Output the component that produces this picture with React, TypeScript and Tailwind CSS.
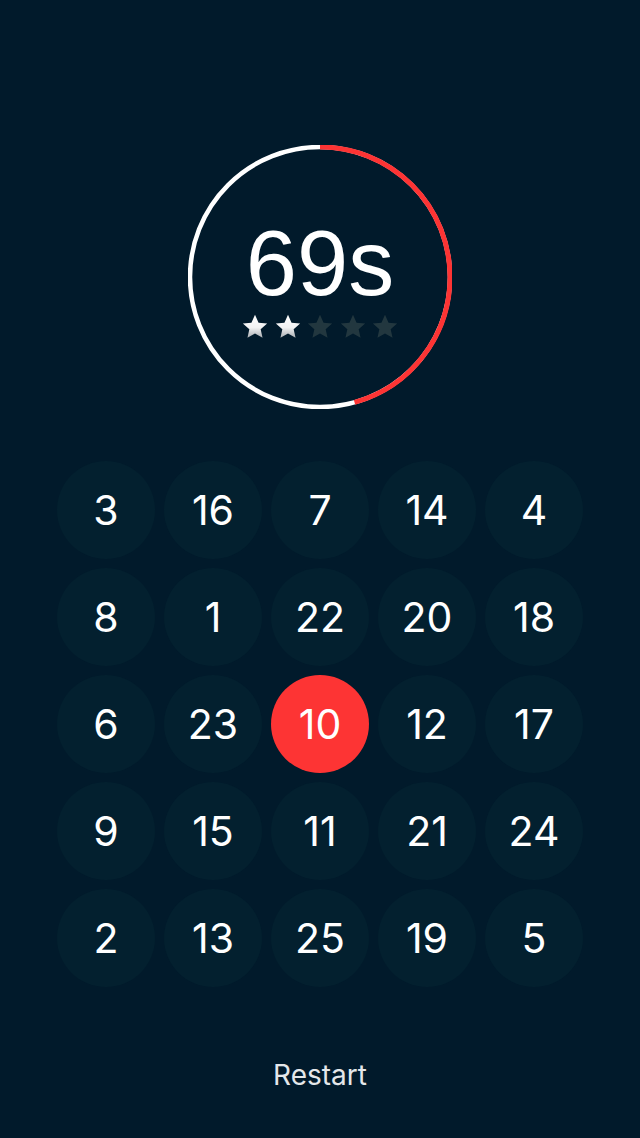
import React from "react";

const NUMBERS = [
  3, 16, 7, 14, 4,
  8, 1, 22, 20, 18,
  6, 23, 10, 12, 17,
  9, 15, 11, 21, 24,
  2, 13, 25, 19, 5,
];

const ACTIVE = 10;
const STARS = 2;
const PROGRESS = 0.457;

const Star = ({ on }: { on: boolean }) => (
  <svg width="28" height="28" viewBox="0 0 24 24">
    <defs>
      <linearGradient id="starGrad" x1="0" y1="0" x2="0" y2="1">
        <stop offset="0%" stopColor="#ffffff" />
        <stop offset="55%" stopColor="#f1f2f3" />
        <stop offset="100%" stopColor="#a9adb1" />
      </linearGradient>
    </defs>
    <path
      d="M12 1.6l3.05 6.75 7.35.72-5.55 4.95 1.62 7.28L12 17.55 5.53 21.3l1.62-7.28L1.6 9.07l7.35-.72z"
      fill={on ? "url(#starGrad)" : "#22373f"}
    />
  </svg>
);

const Timer = () => {
  const r = 130;
  const c = 2 * Math.PI * r;
  return (
    <div className="relative w-[264px] h-[264px] flex flex-col items-center pt-[72px]">
      <svg
        className="absolute inset-0"
        width="264"
        height="264"
        viewBox="0 0 264 264"
      >
        <circle cx="132" cy="132" r={r} fill="none" stroke="#ffffff" strokeWidth="4.5" />
        <circle
          cx="132"
          cy="132"
          r={r}
          fill="none"
          stroke="#fd3434"
          strokeWidth="5"
          strokeDasharray={`${c * PROGRESS} ${c}`}
          transform="rotate(-90 132 132)"
        />
      </svg>
      <div className="relative text-white text-[92px] leading-none font-['Liberation_Sans',Arial,sans-serif]">
        69s
      </div>
      <div className="relative flex gap-[4.5px] mt-[4px]">
        {[0, 1, 2, 3, 4].map((i) => (
          <Star key={i} on={i < STARS} />
        ))}
      </div>
    </div>
  );
};

export default function App() {
  return (
    <div className="min-h-[1138px] w-full bg-[#011a2b] flex flex-col items-center pt-[145px] font-['Inter',sans-serif]">
      <Timer />

      <div className="grid grid-cols-5 gap-[9px] mt-[52px]">
        {NUMBERS.map((n) => (
          <div
            key={n}
            className={`w-[98px] h-[98px] rounded-full flex items-center justify-center text-[41px] leading-none text-white ${
              n === ACTIVE ? "bg-[#fd3434]" : "bg-[#03202f]"
            }`}
          >
            {n}
          </div>
        ))}
      </div>

      <button className="mt-[74px] text-[28px] leading-none text-[#e4e7ea]">
        Restart
      </button>
    </div>
  );
}
